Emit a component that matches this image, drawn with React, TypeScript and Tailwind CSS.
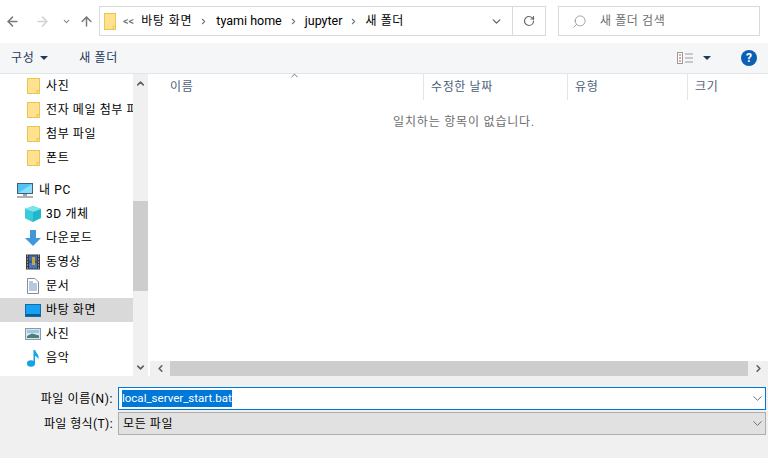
import { ChevronDown, ChevronUp, ChevronLeft, ChevronRight, ArrowLeft, ArrowRight, ArrowUp, RotateCw, Search } from "lucide-react";

const font = "font-['Roboto','Noto_Sans_CJK_KR',sans-serif]";

function Folder({ w = 13, h = 16 }: { w?: number; h?: number }) {
    return (
        <svg width={w} height={h} viewBox="0 0 13 16" preserveAspectRatio="none" className="shrink-0">
            <rect x="0.5" y="0.5" width="12" height="15" fill="#ffe18f" stroke="#e8c64f" />
            <path d="M10 15.5V12.5H12.5" fill="none" stroke="#e8c64f" />
        </svg>
    );
}

function Monitor() {
    return (
        <svg width="16" height="15" viewBox="0 0 16 15" className="shrink-0">
            <rect x="0.5" y="0.5" width="15" height="10" fill="#4fc3f7" stroke="#44606e" />
            <path d="M1 10L15 1V10Z" fill="#8bdcfb" />
            <rect x="6" y="11" width="4" height="2" fill="#9aa6ad" />
            <rect x="0" y="13" width="16" height="2" fill="#a9b2b8" />
        </svg>
    );
}

function Cube() {
    return (
        <svg width="16" height="16" viewBox="0 0 16 16" className="shrink-0">
            <path d="M8 0L16 3V12L8 16L0 12V3Z" fill="#1fb7c9" />
            <path d="M8 0L16 3L8 6L0 3Z" fill="#7fe3ee" />
            <path d="M8 6V16L0 12V3Z" fill="#39cbdc" />
        </svg>
    );
}

function Download() {
    return (
        <svg width="16" height="16" viewBox="0 0 16 16" className="shrink-0">
            <path d="M5 0H11V8H16L8 16L0 8H5Z" fill="#3f97dc" />
        </svg>
    );
}

function Film() {
    return (
        <svg width="14" height="16" viewBox="0 0 14 16" className="shrink-0">
            <rect width="14" height="15" y="0.5" fill="#3c3c3c" />
            <rect x="3" y="1.5" width="8" height="6" fill="#4068b0" />
            <rect x="3" y="8.5" width="8" height="6" fill="#3f78c4" />
            <rect x="6" y="3" width="3" height="8" fill="#c9a838" />
            <path d="M1 2h1M1 5h1M1 8h1M1 11h1M1 14h1M12 2h1M12 5h1M12 8h1M12 11h1M12 14h1" stroke="#ddd" />
        </svg>
    );
}

function Doc() {
    return (
        <svg width="12" height="16" viewBox="0 0 12 16" className="shrink-0">
            <path d="M0.5 0.5H8L11.5 4V15.5H0.5Z" fill="#fff" stroke="#8c8c8c" />
            <path d="M2 4h4M2 6h8M2 8h8M2 10h8M2 12h8" stroke="#6a93c4" />
        </svg>
    );
}

function Desktop() {
    return (
        <svg width="16" height="13" viewBox="0 0 16 13" className="shrink-0">
            <rect x="0.5" y="0.5" width="15" height="12" fill="#18a0f2" stroke="#0d6ea8" />
            <rect x="1" y="10" width="14" height="2" fill="#0a5c92" />
        </svg>
    );
}

function Photo() {
    return (
        <svg width="16" height="12" viewBox="0 0 16 12" className="shrink-0">
            <rect x="0.5" y="0.5" width="15" height="11" fill="#d5e6f2" stroke="#8d9aa3" />
            <path d="M2 8L7 5.5L14 7.5V10H2Z" fill="#4d7f75" />
            <rect x="2" y="2" width="12" height="3" fill="#9cc6e4" />
        </svg>
    );
}

function Note() {
    return (
        <svg width="13" height="17" viewBox="0 0 13 17" className="shrink-0">
            <ellipse cx="4" cy="13.5" rx="4" ry="3.2" fill="#17a2e8" />
            <path d="M6.5 0H8.2C8.6 3 12.5 4.5 11.5 9.5C11 7.5 9.5 6.5 8 6V14H6.5Z" fill="#17a2e8" />
        </svg>
    );
}

function NavRow({ icon, label, active, root }: { icon: React.ReactNode; label: string; active?: boolean; root?: boolean }) {
    return (
        <div className={`flex h-6 items-center overflow-hidden whitespace-nowrap ${root ? "pl-[17px]" : "pl-[25px]"} ${active ? "bg-[#d9d9d9]" : ""}`}>
            <div className="flex w-4 shrink-0 justify-center">{icon}</div>
            <span className={`${root ? "ml-[6px]" : "ml-[5px]"} text-[12px] text-black`}>{label}</span>
        </div>
    );
}

function App() {
    return (
        <div className={`flex h-[458px] w-[768px] flex-col overflow-hidden bg-white text-[12px] tracking-[0.6px] ${font}`}>
            {/* address row */}
            <div className="flex h-[43px] shrink-0 items-start pt-[6px]">
                <div className="flex h-[30px] w-[99px] shrink-0 items-center pl-[5px]">
                    <ArrowLeft size={15} className="text-[#7a7a7a]" strokeWidth={2.4} />
                    <ArrowRight size={15} className="ml-[15px] text-[#d2d2d2]" strokeWidth={2.4} />
                    <ChevronDown size={9} className="ml-[12px] text-[#8a8a8a]" strokeWidth={3} />
                    <ArrowUp size={15} className="ml-[8px] text-[#7a7a7a]" strokeWidth={2.4} />
                </div>
                <div className="flex h-[30px] w-[414px] shrink-0 items-center border border-[#d9d9d9] pl-[4px]">
                    <Folder w={12} h={17} />
                    <span className="ml-[7px] text-[11px] leading-none tracking-normal text-[#666]">&lt;&lt;</span>
                    <span className="ml-[7px] whitespace-pre text-[12px] tracking-[0.8px] text-black">바탕 화면</span>
                    <ChevronRight size={9} className="ml-[7px] text-[#777]" strokeWidth={3} />
                    <span className="ml-[8px] whitespace-pre text-[12.5px] tracking-normal text-black">tyami home</span>
                    <ChevronRight size={9} className="ml-[7px] text-[#777]" strokeWidth={3} />
                    <span className="ml-[7px] text-[12.5px] tracking-normal text-black">jupyter</span>
                    <ChevronRight size={9} className="ml-[7px] text-[#777]" strokeWidth={3} />
                    <span className="ml-[7px] whitespace-pre text-[12px] text-black">새 폴더</span>
                    <ChevronDown size={13} className="ml-auto mr-[9px] text-[#666]" strokeWidth={2.5} />
                </div>
                <div className="flex h-[30px] w-[33px] shrink-0 items-center justify-center border border-l-0 border-[#d9d9d9]">
                    <RotateCw size={12} className="text-[#666]" strokeWidth={2.4} />
                </div>
                <div className="ml-[12px] flex h-[30px] w-[202px] shrink-0 items-center border border-[#d9d9d9] pl-[13px]">
                    <Search size={15} className="-scale-x-100 text-[#8a8a8a]" strokeWidth={1.2} />
                    <span className="ml-[13px] text-[#6d6d6d]">새 폴더 검색</span>
                </div>
            </div>

            {/* toolbar */}
            <div className="flex h-[31px] shrink-0 items-center border-b border-[#e5e5e5] bg-[#f5f6f7] pb-[1px]">
                <span className="ml-[11px] text-[#1e395b]">구성</span>
                <span className="ml-[6px] h-0 w-0 border-x-[4px] border-t-[4px] border-x-transparent border-t-[#1e395b]" />
                <span className="ml-[31px] text-[#1e395b]">새 폴더</span>
                <div className="ml-auto mr-[11px] flex items-center">
                    <svg width="16" height="12" viewBox="0 0 16 12">
                        <rect x="0.5" y="0.5" width="5" height="11" fill="#fff" stroke="#9a9a9a" />
                        <path d="M2 3h2M2 6h2M2 9h2" stroke="#c05050" />
                        <path d="M8 2h8M8 6h8M8 10h8" stroke="#9a9a9a" />
                    </svg>
                    <span className="ml-[10px] h-0 w-0 border-x-[4px] border-t-[4px] border-x-transparent border-t-[#1e395b]" />
                    <span className="ml-[30px] flex h-4 w-4 items-center justify-center rounded-full bg-[#0b5fb4] text-[12px] leading-none font-bold tracking-normal text-white">?</span>
                </div>
            </div>

            {/* main */}
            <div className="flex h-[302px] shrink-0">
                <div className="w-[133px] shrink-0 overflow-hidden">
                    <NavRow icon={<Folder />} label="사진" />
                    <NavRow icon={<Folder />} label="전자 메일 첨부 파일" />
                    <NavRow icon={<Folder />} label="첨부 파일" />
                    <NavRow icon={<Folder />} label="폰트" />
                    <div className="h-2" />
                    <NavRow icon={<Monitor />} label="내 PC" root />
                    <NavRow icon={<Cube />} label="3D 개체" />
                    <NavRow icon={<Download />} label="다운로드" />
                    <NavRow icon={<Film />} label="동영상" />
                    <NavRow icon={<Doc />} label="문서" />
                    <NavRow icon={<Desktop />} label="바탕 화면" active />
                    <NavRow icon={<Photo />} label="사진" />
                    <NavRow icon={<Note />} label="음악" />
                </div>
                <div className="flex w-[15px] shrink-0 flex-col items-center bg-[#f0f0f0]">
                    <ChevronUp size={11} className="mt-[4px] text-[#606060]" strokeWidth={3.5} />
                    <div className="mt-[112px] h-[90px] w-full bg-[#cdcdcd]" />
                    <ChevronDown size={11} className="mt-auto mb-[3px] text-[#606060]" strokeWidth={3.5} />
                </div>
                <div className="flex min-w-0 flex-1 flex-col pl-[2px]">
                    <div className="relative flex h-[26px] shrink-0 items-center text-[#4c607a]">
                        <ChevronUp size={11} className="absolute top-[-4px] left-[139px] text-[#666]" strokeWidth={2} />
                        <div className="flex h-full w-[274px] items-center border-r border-[#e5e5e5] pl-[20px]">이름</div>
                        <div className="flex h-full w-[144px] items-center border-r border-[#e5e5e5] pl-[7px]">수정한 날짜</div>
                        <div className="flex h-full w-[120px] items-center border-r border-[#e5e5e5] pl-[7px]">유형</div>
                        <div className="pl-[7px]">크기</div>
                    </div>
                    <div className="flex-1 pt-[13px] text-center tracking-[0.8px] text-[#6d6d6d]">
                        <span className="relative left-[5px]">일치하는 항목이 없습니다.</span>
                    </div>
                    <div className="flex h-[15px] shrink-0 items-center bg-[#f0f0f0]">
                        <div className="flex w-[20px] justify-center">
                            <ChevronLeft size={11} className="text-[#606060]" strokeWidth={3.5} />
                        </div>
                        <div className="h-full flex-1 bg-[#cdcdcd]" />
                        <div className="flex w-[20px] justify-center">
                            <ChevronRight size={11} className="text-[#606060]" strokeWidth={3.5} />
                        </div>
                    </div>
                </div>
            </div>

            {/* file name */}
            <div className="flex flex-1 flex-col gap-[2px] bg-[#f0f0f0] pt-[11px] pr-[2px]">
                <div className="flex h-[23px] items-center">
                    <div className="w-[118px] pr-[5px] text-right text-black">파일 이름(N):</div>
                    <div className="flex h-[23px] flex-1 items-center border border-[#0078d7] bg-white pl-[3px]">
                        <span className="bg-[#0078d7] text-[11.5px] tracking-normal text-white">local_server_start.bat</span>
                        <ChevronDown size={15} className="ml-auto text-[#555]" strokeWidth={1.3} />
                    </div>
                </div>
                <div className="flex h-[23px] items-center">
                    <div className="w-[118px] pr-[5px] text-right tracking-[0.4px] text-black">파일 형식(T):</div>
                    <div className="flex h-[23px] flex-1 items-center border border-[#adadad] bg-[#e1e1e1] pl-[4px]">
                        <span className="text-black">모든 파일</span>
                        <ChevronDown size={15} className="ml-auto text-[#555]" strokeWidth={1.3} />
                    </div>
                </div>
            </div>
        </div>
    );
}

export default App;
